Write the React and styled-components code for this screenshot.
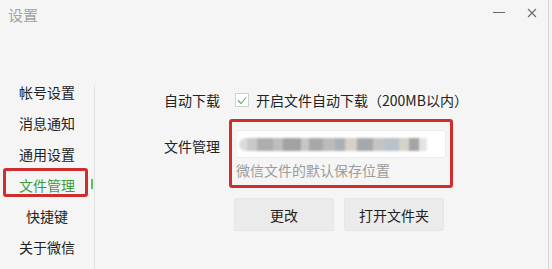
import React from "react";
import styled, { createGlobalStyle } from "styled-components";

const Global = createGlobalStyle`
  html, body { margin: 0; padding: 0; background: #f5f5f5; }
  body { font-family: "Noto Sans CJK SC", "Noto Sans", sans-serif; }
`;

const Window = styled.div`
  width: 548px;
  height: 269px;
  background: #f5f5f5;
  border-right: 1px solid #d4d4d4;
  display: flex;
  flex-direction: column;
  overflow: hidden;
`;

const Header = styled.div`
  height: 77px;
  display: flex;
  justify-content: space-between;
  align-items: flex-start;
  flex-shrink: 0;
`;

const Title = styled.div`
  padding: 5px 0 0 8px;
  font-size: 15px;
  line-height: 20px;
  color: #a3a3a3;
`;

const Controls = styled.div`
  display: flex;
  align-items: center;
  gap: 22px;
  padding: 7px 11px 0 0;
`;

const IconBtn = styled.div`
  width: ${(p) => p.$w}px;
  height: 11px;
  display: flex;
  align-items: center;
  justify-content: center;
`;

const Body = styled.div`
  flex: 1;
  display: flex;
`;

const Sidebar = styled.div`
  width: 94px;
  display: flex;
  flex-direction: column;
  flex-shrink: 0;
`;

const Divider = styled.div`
  width: 1px;
  margin-top: 8px;
  background: #e2e2e2;
  align-self: stretch;
`;

const NavItem = styled.div`
  position: relative;
  height: 31px;
  line-height: 31px;
  text-align: center;
  font-size: 14px;
  color: ${(p) => (p.$active ? "#3a9d3a" : "#222")};

  ${(p) =>
    p.$active &&
    `
    &::before {
      content: "";
      position: absolute;
      left: 3px;
      top: -2px;
      width: 79px;
      height: 23px;
      border: 3px solid #cf2f2c;
      border-radius: 3px;
    }
    &::after {
      content: "";
      position: absolute;
      left: 91px;
      top: 9px;
      width: 2px;
      height: 10px;
      background: #5fbf5f;
    }
  `}
`;

const Main = styled.div`
  flex: 1;
  padding: 13px 0 0 69px;
  display: flex;
  flex-direction: column;
`;

const Row = styled.div`
  display: flex;
  align-items: ${(p) => p.$align || "center"};
  margin-top: ${(p) => p.$mt || 0}px;
`;

const Label = styled.div`
  width: 71px;
  font-size: 14px;
  line-height: 20px;
  color: #222;
  padding-top: ${(p) => p.$pt || 0}px;
  flex-shrink: 0;
`;

const CheckBox = styled.div`
  width: 12px;
  height: 12px;
  border: 1px solid #d0d0d0;
  background: #fff;
  display: flex;
  align-items: center;
  justify-content: center;
`;

const CheckText = styled.div`
  margin-left: 7px;
  font-size: 14px;
  line-height: 20px;
  color: #222;
  white-space: nowrap;
`;

const FieldGroup = styled.div`
  position: relative;
  display: flex;
  flex-direction: column;

  &::before {
    content: "";
    position: absolute;
    left: -6px;
    right: -7px;
    top: -11px;
    bottom: -8px;
    border: 3px solid #cf2f2c;
    border-radius: 3px;
    pointer-events: none;
  }
`;

const PathBox = styled.div`
  margin-left: 2px;
  width: 206px;
  height: 26px;
  background: #fff;
  border: 1px solid #ececec;
  border-left: none;
  display: flex;
  align-items: center;
  padding-left: 2px;
  box-sizing: content-box;
  overflow: hidden;
`;

const Blur = styled.div`
  display: flex;
  align-items: center;
  height: 14px;
  filter: blur(1.3px);
`;

const Chunk = styled.div`
  height: ${(p) => p.$h || 13}px;
  width: ${(p) => p.$w}px;
  background: ${(p) => p.$c};
  border-radius: ${(p) => (p.$round ? "7px 0 0 7px" : "0")};
`;

const Hint = styled.div`
  margin: 2px 0 0 1px;
  font-size: 14px;
  line-height: 20px;
  color: #9c9c9c;
  white-space: nowrap;
`;

const Buttons = styled.div`
  display: flex;
  gap: 10px;
  margin-left: -1px;
`;

const Button = styled.div`
  width: 100px;
  height: 33px;
  box-sizing: border-box;
  background: #ebebeb;
  border: 1px solid #e6e6e6;
  border-radius: 2px;
  display: flex;
  align-items: center;
  justify-content: center;
  font-size: 14px;
  color: #222;
`;

const chunks = [
  { w: 8, c: "#dcdcdc", round: true },
  { w: 10, c: "#c9c9c9" },
  { w: 16, c: "#adadad" },
  { w: 10, c: "#bdbdbd" },
  { w: 18, c: "#a2a2a2" },
  { w: 8, c: "#c6c6c6" },
  { w: 14, c: "#a8a8a8" },
  { w: 12, c: "#bcbcbc" },
  { w: 10, c: "#aab0b8" },
  { w: 12, c: "#d6d0c6" },
  { w: 16, c: "#a6a8ad" },
  { w: 12, c: "#c4c4c4" },
  { w: 14, c: "#b8c2ca" },
  { w: 10, c: "#d6d2ca" },
  { w: 10, c: "#a4a4a4" },
  { w: 8, c: "#e4e4e4" },
];

const navItems = ["帐号设置", "消息通知", "通用设置", "文件管理", "快捷键", "关于微信"];

export default function App() {
  return (
    <>
      <Global />
      <Window>
        <Header>
          <Title>设置</Title>
          <Controls>
            <IconBtn $w={12}>
              <svg width="12" height="11" viewBox="0 0 12 11">
                <line x1="0" y1="5.5" x2="12" y2="5.5" stroke="#6a6a6a" strokeWidth="1" />
              </svg>
            </IconBtn>
            <IconBtn $w={10}>
              <svg width="10" height="10" viewBox="0 0 10 10">
                <path d="M1 1 L9 9 M9 1 L1 9" stroke="#6a6a6a" strokeWidth="1.1" />
              </svg>
            </IconBtn>
          </Controls>
        </Header>
        <Body>
          <Sidebar>
            {navItems.map((t) => (
              <NavItem key={t} $active={t === "文件管理"}>
                {t}
              </NavItem>
            ))}
          </Sidebar>
          <Divider />
          <Main>
            <Row>
              <Label>自动下载</Label>
              <CheckBox>
                <svg width="10" height="9" viewBox="0 0 10 9">
                  <path d="M1 4.5 L4 7.5 L9 1.5" fill="none" stroke="#4caf50" strokeWidth="1.1" />
                </svg>
              </CheckBox>
              <CheckText>开启文件自动下载（200MB以内）</CheckText>
            </Row>
            <Row $align="flex-start" $mt={20}>
              <Label $pt={6}>文件管理</Label>
              <FieldGroup>
                <PathBox>
                  <Blur>
                    {chunks.map((c, i) => (
                      <Chunk key={i} $w={c.w} $c={c.c} $round={c.round} />
                    ))}
                  </Blur>
                </PathBox>
                <Hint>微信文件的默认保存位置</Hint>
              </FieldGroup>
            </Row>
            <Row $mt={18}>
              <Label />
              <Buttons>
                <Button>更改</Button>
                <Button>打开文件夹</Button>
              </Buttons>
            </Row>
          </Main>
        </Body>
      </Window>
    </>
  );
}
